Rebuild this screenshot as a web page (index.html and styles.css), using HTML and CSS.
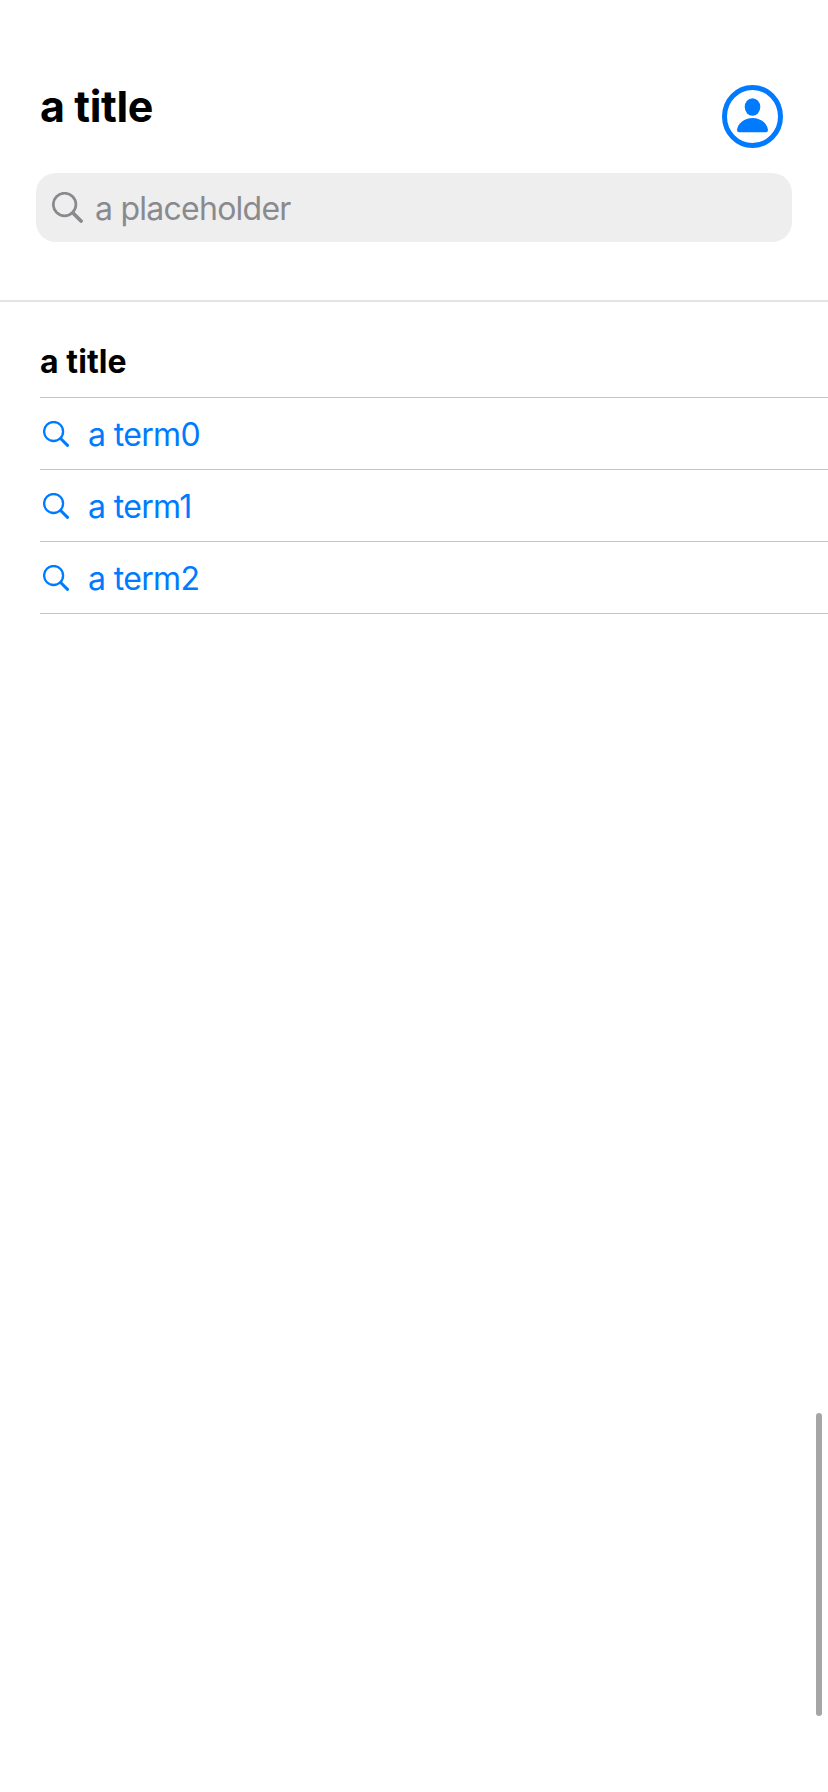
FILE: index.html
```html
<!DOCTYPE html>
<html lang="en">
<head>
<meta charset="utf-8">
<title>Search</title>
<link rel="stylesheet" href="styles.css">
</head>
<body>
<svg class="defs" aria-hidden="true">
  <symbol id="search" viewBox="0 0 26 26">
    <circle cx="10.6" cy="10.5" r="9.5" fill="none" stroke="currentColor" stroke-width="2.3"/>
    <path d="M17.6 17.5L24.5 24.4" fill="none" stroke="currentColor" stroke-width="3" stroke-linecap="round"/>
  </symbol>
</svg>
<header class="header">
  <div class="heading">
    <h1 class="title">a title</h1>
    <svg class="avatar" viewBox="0 0 61 63">
      <ellipse cx="30.5" cy="31.5" rx="28" ry="29" fill="none" stroke="currentColor" stroke-width="5"/>
      <ellipse cx="30.5" cy="22" rx="7.8" ry="8.7" fill="currentColor"/>
      <path d="M17 47.2Q15 47.2 15 45C15.8 38 22.5 33 30.5 33S45.2 38 46 45Q46 47.2 44 47.2Z" fill="currentColor"/>
    </svg>
  </div>
  <div class="field">
    <svg class="field-icon" viewBox="0 0 31 31">
      <circle cx="12.6" cy="12.5" r="11.3" fill="none" stroke="currentColor" stroke-width="2.7"/>
      <path d="M21 21L29 29" fill="none" stroke="currentColor" stroke-width="3.8" stroke-linecap="round"/>
    </svg>
    <span class="placeholder">a placeholder</span>
  </div>
</header>
<main class="list">
  <h2 class="section">a title</h2>
  <div class="row"><svg class="icon"><use href="#search"/></svg><span class="term">a term0</span></div>
  <div class="row"><svg class="icon"><use href="#search"/></svg><span class="term">a term1</span></div>
  <div class="row"><svg class="icon"><use href="#search"/></svg><span class="term">a term2</span></div>
</main>
<div class="scrollbar"></div>
</body>
</html>
```
FILE: styles.css
```css
* { box-sizing: border-box; }
body {
  margin: 0;
  height: 1792px;
  position: relative;
  overflow: hidden;
  background: #fff;
  font-family: Inter, "Liberation Sans", sans-serif;
}
.defs { position: absolute; width: 0; height: 0; }
.header {
  height: 302px;
  padding: 85px 36px 0;
  border-bottom: 2px solid #e4e4e4;
}
.heading {
  display: flex;
  justify-content: space-between;
  height: 88px;
  padding: 0 9px 0 4px;
}
.title {
  margin: 0;
  font-size: 43px;
  line-height: 42px;
  font-weight: 700;
  letter-spacing: -0.4px;
}
.avatar { width: 61px; height: 63px; color: #007aff; }
.field {
  display: flex;
  align-items: center;
  height: 69px;
  padding-left: 16px;
  border-radius: 20px;
  background: #eeeeee;
  color: #8a8a8e;
}
.field-icon { width: 31px; height: 31px; margin-right: 12px; }
.placeholder { padding-top: 2px; font-size: 32px; line-height: 40px; letter-spacing: -0.75px; }
.list { padding-left: 40px; }
.section {
  display: flex;
  align-items: center;
  margin: 0;
  height: 96px;
  padding-top: 23px;
  border-bottom: 1px solid #c6c6c8;
  font-size: 32px;
  font-weight: 700;
  letter-spacing: 0.1px;
}
.row {
  display: flex;
  align-items: center;
  height: 72px;
  border-bottom: 1px solid #c6c6c8;
  color: #007aff;
  font-size: 32px;
  letter-spacing: -0.65px;
}
.term { padding-top: 1px; }
.icon { width: 26px; height: 26px; margin: 0 19px 0 3px; }
.scrollbar {
  position: absolute;
  left: 816px;
  top: 1413px;
  width: 6px;
  height: 303px;
  border-radius: 3px;
  background: #a6a6a6;
}
```
